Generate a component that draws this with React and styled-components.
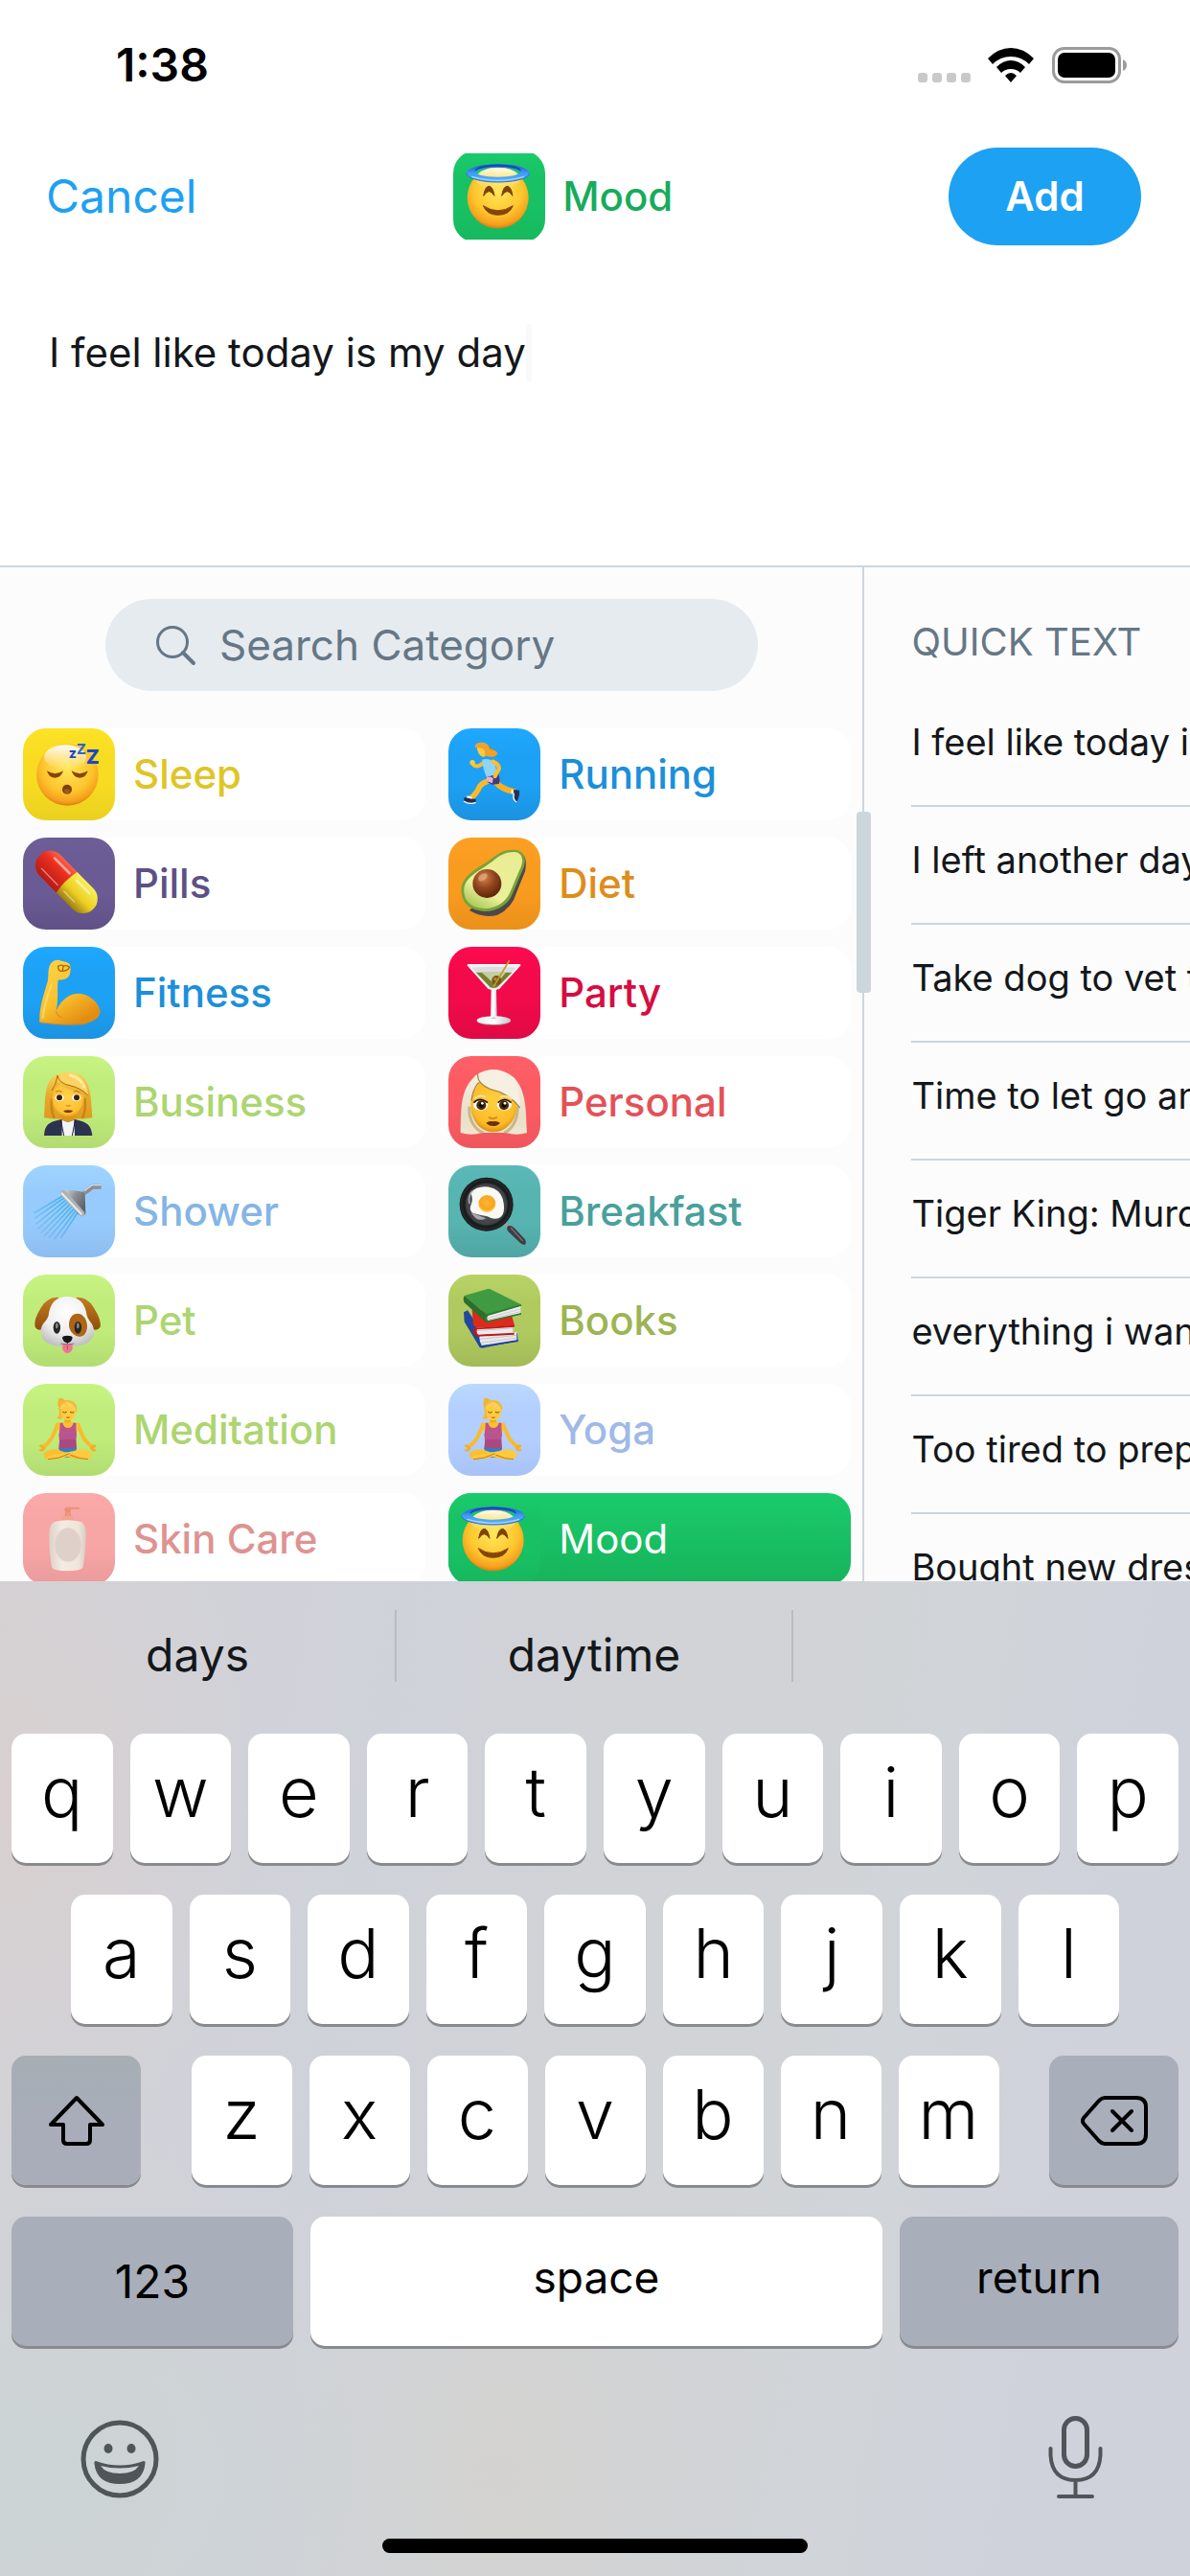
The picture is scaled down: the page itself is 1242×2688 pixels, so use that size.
import React, { useState } from 'react';
import styled, { createGlobalStyle, css } from 'styled-components';

const GlobalStyle = createGlobalStyle`
  * { box-sizing: border-box; }
  body { margin: 0; background: #fff; }
  body, button, input, textarea { font-family: Inter, "Liberation Sans", sans-serif; }
  button { border: 0; padding: 0; background: none; cursor: pointer; }
  ul { list-style: none; margin: 0; padding: 0; }
`;

const Screen = styled.div`
  display: flex;
  flex-direction: column;
  height: 100vh;
  overflow: hidden;
  color: #14171a;
`;

/* ---------- status bar ---------- */
const StatusBar = styled.div`
  display: flex;
  align-items: center;
  justify-content: space-between;
  height: 136px;
  padding: 0 64px 0 121px;
  flex: none;
`;
const Clock = styled.time`
  font-size: 48px;
  line-height: 60px;
  font-weight: 600;
  color: #000;
`;
const StatusIcons = styled.svg`
  display: block;
  width: 220px;
  height: 38px;
`;

/* ---------- header ---------- */
const Header = styled.header`
  display: flex;
  align-items: center;
  justify-content: space-between;
  padding: 18px 51px 0 48px;
  flex: none;
`;
const CancelButton = styled.button`
  font-size: 48px;
  line-height: 60px;
  color: #1da1f2;
`;
const Title = styled.h1`
  display: flex;
  align-items: center;
  gap: 18px;
  margin: 0;
  padding-right: 20px;
  font-size: 42px;
  line-height: 56px;
  font-weight: 500;
  color: #17ab5c;
`;
const TitleIcon = styled.span`
  display: flex;
  align-items: center;
  height: 90px;
  overflow: hidden;
`;
const AddButton = styled.button`
  width: 201px;
  height: 102px;
  border-radius: 51px;
  background: #1da1f2;
  color: #fff;
  font-size: 42px;
  line-height: 56px;
  font-weight: 600;
`;

/* ---------- compose ---------- */
const Compose = styled.label`
  display: flex;
  align-items: flex-start;
  height: 334px;
  padding: 82px 51px 0;
  flex: none;
  cursor: text;
`;
const ComposeInput = styled.input`
  field-sizing: content;
  border: 0;
  padding: 0;
  outline: 0;
  background: none;
  height: 60px;
  font-size: 42px;
  line-height: 60px;
  color: #14171a;
`;
const Caret = styled.span`
  width: 6px;
  height: 60px;
  border-radius: 3px;
  background: #f7f9fa;
`;

/* ---------- panels ---------- */
const Panels = styled.main`
  display: grid;
  grid-template-columns: minmax(0, 29fr) minmax(0, 11fr);
  flex: 1 1 0;
  min-height: 0;
  overflow: hidden;
  border-top: 2px solid #ccd6dd;
  background: #fcfcfc;
`;
const CategoryPanel = styled.section`
  min-height: 0;
  overflow: hidden;
  padding-top: 33px;
`;
const SearchBox = styled.label`
  display: flex;
  align-items: center;
  gap: 24px;
  height: 96px;
  margin: 0 109px 0 110px;
  padding: 0 48px 0 52px;
  border-radius: 48px;
  background: #e6ebef;
  color: #657786;
`;
const SearchInput = styled.input`
  flex: 1;
  min-width: 0;
  border: 0;
  padding: 0;
  outline: 0;
  background: none;
  font-size: 44px;
  line-height: 60px;
  color: #657786;
  &::placeholder { color: #657786; opacity: 1; }
`;
const Glyph = styled.svg`
  display: block;
  flex: none;
  width: ${(p) => p.$w}px;
  height: ${(p) => p.$h}px;
`;
const CategoryGrid = styled.ul`
  display: grid;
  grid-template-columns: 1fr 1fr;
  gap: 18px 24px;
  padding: 39px 12px 0 24px;
`;
const CategoryButton = styled.button`
  display: flex;
  align-items: center;
  gap: 19px;
  width: 100%;
  height: 96px;
  border-radius: 24px;
  background: ${(p) => (p.$active ? 'linear-gradient(#1acb6b, #17b35b)' : '#fff')};
  color: ${(p) => (p.$active ? '#fff' : p.$ink)};
  font-size: 42px;
  line-height: 56px;
  font-weight: ${(p) => (p.$active ? 400 : 500)};
`;
const Tile = styled.span`
  display: block;
  flex: none;
  width: 96px;
  height: 96px;
  border-radius: 24px;
  background: linear-gradient(${(p) => p.$from}, ${(p) => p.$mid} 30%, ${(p) => p.$mid} 60%, ${(p) => p.$to});
`;
const Picture = styled.svg`
  display: block;
  width: 96px;
  height: 96px;
`;

const QuickPanel = styled.aside`
  position: relative;
  min-height: 0;
  padding: 50px 0 0 49px;
  border-left: 2px solid #ccd6dd;
`;
const DragHandle = styled.span`
  position: absolute;
  left: -8px;
  top: 255px;
  width: 15px;
  height: 189px;
  border-radius: 4px;
  background: #ccd6dd;
`;
const QuickArea = styled.div`
  height: 100%;
  overflow: hidden;
`;
const QuickTitle = styled.h2`
  margin: 0 0 21px;
  font-size: 40px;
  line-height: 56px;
  font-weight: 400;
  color: #657786;
`;
const QuickItem = styled.button`
  display: flex;
  align-items: center;
  width: 100%;
  height: 123px;
  padding-bottom: 12px;
  border-bottom: 2px solid #ccd6dd;
  font-size: 38px;
  line-height: 56px;
  color: #14171a;
  white-space: nowrap;
`;

/* ---------- keyboard ---------- */
const Keyboard = styled.section`
  flex: none;
  padding-bottom: 24px;
  background:
    radial-gradient(ellipse 22% 36% at 0% 22%, rgba(216, 208, 208, 1), rgba(216, 208, 208, 0)),
    radial-gradient(ellipse 40% 36% at 0% 90%, rgba(204, 212, 212, 1), rgba(204, 212, 212, 0)),
    radial-gradient(ellipse 20% 30% at 42% 90%, rgba(211, 210, 208, 1), rgba(211, 210, 208, 0)),
    linear-gradient(100deg, #d2d2d6 0%, #d0d2da 30%, #d1d3d6 50%, #d1d4d8 72%, #cfd2db 85%);
`;
const Suggestions = styled.div`
  display: grid;
  grid-template-columns: repeat(3, 1fr);
  height: 159px;
  padding-top: 30px;
`;
const Suggestion = styled.button`
  height: 75px;
  padding-top: 18px;
  border-right: 2px solid ${(p) => (p.$last ? 'transparent' : '#b9bbc0')};
  font-size: 48px;
  line-height: 56px;
  color: #14171a;
`;
const KeyRow = styled.div`
  display: flex;
  justify-content: space-between;
  gap: 18px;
  padding: 0 ${(p) => p.$inset || 12}px 33px;
`;
const LetterGroup = styled.div`
  display: flex;
  gap: 18px;
  flex: 0 1 843px;
`;
const keyBase = css`
  display: flex;
  align-items: center;
  justify-content: center;
  min-width: 0;
  height: 135px;
  border-radius: 15px;
  box-shadow: 0 3px 0 #898a8d;
  color: #000;
`;
const LetterKey = styled.button`
  ${keyBase}
  flex: 1;
  padding-bottom: 14px;
  background: #fff;
  font-size: 72px;
  line-height: 84px;
  font-weight: 300;
`;
const ControlKey = styled.button`
  ${keyBase}
  flex: ${(p) => (p.$grow ? '1 1 0' : `0 0 ${p.$w}px`)};
  padding-bottom: ${(p) => (p.$word ? 10 : 0)}px;
  background: ${(p) => (p.$light ? '#fff' : p.$warm ? 'linear-gradient(#a6aeb4, #a9adba 60%)' : '#a8aeba')};
  font-size: ${(p) => (p.$word ? 46 : 48)}px;
  line-height: 56px;
`;
const KeyboardFooter = styled.div`
  display: flex;
  justify-content: space-between;
  height: 168px;
  padding: 40px 90px 0 80px;
`;
const IconButton = styled.button`
  height: 90px;
  color: #50555a;
`;
const HomeBar = styled.div`
  width: 444px;
  height: 15px;
  margin: 0 auto;
  border-radius: 8px;
  background: #000;
`;

/* ---------- category pictures, drawn on a 288 grid ---------- */
const FaceFill = ({ id }) => (
  <radialGradient id={id} cx="50%" cy="38%" r="62%">
    <stop offset="0" stopColor="#ffe85c" />
    <stop offset="0.65" stopColor="#fdc52c" />
    <stop offset="0.9" stopColor="#f5a01d" />
    <stop offset="1" stopColor="#dd7f12" />
  </radialGradient>
);

const Sleep = () => (
  <>
    <defs>
      <FaceFill id="sleepFace" />
      <linearGradient id="sleepShine" x2="0" y2="1">
        <stop offset="0" stopColor="#fff" stopOpacity="0.95" />
        <stop offset="1" stopColor="#fff" stopOpacity="0" />
      </linearGradient>
    </defs>
    <circle cx="139" cy="145" r="97" fill="url(#sleepFace)" />
    <ellipse cx="132" cy="90" rx="66" ry="38" fill="url(#sleepShine)" />
    <path d="M75 133Q100 150 126 133Q120 154 100 155Q80 154 75 133ZM152 133Q178 150 203 133Q198 154 178 155Q158 154 152 133Z" fill="#874608" />
    <circle cx="138" cy="191" r="15" fill="#7c4009" />
    <ellipse cx="138" cy="197" rx="9" ry="7" fill="#a05a1a" />
    <g fill="#1c47c6" fontFamily="Inter, sans-serif" fontWeight="800">
      <text x="143" y="93" fontSize="42">z</text>
      <text x="168" y="81" fontSize="43" fill="#2d66d0">Z</text>
      <text x="197" y="110" fontSize="62">Z</text>
    </g>
  </>
);

const Pills = () => (
  <>
    <defs>
      <linearGradient id="pillRed" x2="0" y2="1">
        <stop offset="0" stopColor="#f8644a" />
        <stop offset="0.35" stopColor="#ea2f20" />
        <stop offset="1" stopColor="#b81a14" />
      </linearGradient>
      <linearGradient id="pillYellow" x2="0" y2="1">
        <stop offset="0" stopColor="#f9ef5c" />
        <stop offset="0.55" stopColor="#edcf22" />
        <stop offset="1" stopColor="#9b7c12" />
      </linearGradient>
    </defs>
    <g transform="translate(137 140) rotate(45.5)">
      <path d="M2-46H-74A46 46 0 0 0-74 46H2Z" fill="url(#pillRed)" />
      <path d="M0-46H72A46 46 0 0 1 72 46H0Q-10 0 0-46Z" fill="url(#pillYellow)" />
      <path d="M-80-26H-14M18-26H74" stroke="#fff" strokeOpacity="0.5" strokeWidth="8" strokeLinecap="round" />
      <path d="M-86 26H-14M14 26H60" stroke="#fff" strokeOpacity="0.45" strokeWidth="4" strokeLinecap="round" />
    </g>
  </>
);

const Fitness = () => (
  <>
    <defs>
      <linearGradient id="arm" x2="0.6" y2="1">
        <stop offset="0" stopColor="#ffd54a" />
        <stop offset="0.6" stopColor="#fcc02c" />
        <stop offset="1" stopColor="#e28d12" />
      </linearGradient>
    </defs>
    <path d="M52 237C50 195 62 160 78 105C80 82 78 66 86 54C94 42 108 38 120 44C132 46 148 50 148 60C150 66 149 84 144 92C136 102 122 103 110 104C106 130 112 156 104 200C122 160 150 145 176 146C214 150 238 178 242 202C240 226 216 236 190 241C146 246 92 242 52 237Z" fill="url(#arm)" />
    <path d="M104 202C104 212 114 220 122 220M52 236C100 243 160 246 200 240" stroke="#d98a12" strokeWidth="4" fill="none" strokeLinecap="round" opacity="0.7" />
    <path d="M110 62Q118 54 128 60Q138 56 146 64Q136 78 118 76M110 60Q108 72 118 76M126 62L124 74" stroke="#a8650b" strokeWidth="4" fill="none" strokeLinecap="round" />
    <path d="M88 120C80 150 66 180 62 222" stroke="#ffe27a" strokeWidth="6" fill="none" opacity="0.7" strokeLinecap="round" />
  </>
);

const Business = () => (
  <>
    <defs>
      <linearGradient id="bizHair" x2="0" y2="1">
        <stop offset="0" stopColor="#fbd65c" />
        <stop offset="0.5" stopColor="#e9a92c" />
        <stop offset="1" stopColor="#df9a20" />
      </linearGradient>
      <radialGradient id="bizFace" cx="50%" cy="45%" r="58%">
        <stop offset="0" stopColor="#ffd24a" />
        <stop offset="0.8" stopColor="#fdc033" />
        <stop offset="1" stopColor="#d98c14" />
      </radialGradient>
    </defs>
    <path d="M66 193C70 140 66 88 94 66C112 48 164 40 192 70C214 100 214 150 217 193Q180 200 142 196Q100 200 66 193Z" fill="url(#bizHair)" />
    <path d="M90 132Q86 170 98 194M194 132Q198 170 186 194" stroke="#a8690d" strokeWidth="7" opacity="0.5" fill="none" />
    <path d="M120 176H162V206H120Z" fill="#dd9518" />
    <path d="M91 128C92 106 102 96 110 84C130 104 170 110 190 124C192 160 172 190 141 190C110 190 90 160 91 128Z" fill="url(#bizFace)" />
    <path d="M66 249C68 216 80 206 118 199L141 206L164 199C200 206 214 216 217 249Z" fill="#2b3350" />
    <path d="M122 200L141 207L160 200L162 249H122Z" fill="#f2f4f8" />
    <path d="M118 199L128 249M164 199L154 249" stroke="#171d33" strokeWidth="3" />
    <path d="M108 62Q114 84 150 92Q184 100 204 122Q200 72 160 54Q130 46 108 62Z" fill="#fbd464" />
    <path d="M108 60Q112 86 150 93Q180 100 203 122M108 62Q104 90 90 108" stroke="#a8690d" strokeWidth="3" fill="none" />
    <path d="M148 60Q180 68 192 96" stroke="#fff3b8" strokeWidth="9" fill="none" strokeLinecap="round" opacity="0.7" />
    <path d="M102 112Q112 106 122 112M158 112Q168 106 178 114" stroke="#b87713" strokeWidth="3" fill="none" />
    <ellipse cx="114" cy="130" rx="14" ry="11" fill="#fff" /><ellipse cx="167" cy="130" rx="14" ry="11" fill="#fff" />
    <circle cx="114" cy="130" r="9" fill="#3a2108" /><circle cx="168" cy="130" r="9" fill="#3a2108" />
    <path d="M126 171Q141 166 157 171Q152 178 141 178Q130 178 126 171Z" fill="#7e3912" />
    <path d="M135 154Q141 159 148 154" stroke="#dd8f12" strokeWidth="4" fill="none" />
  </>
);

const Personal = () => (
  <>
    <defs>
      <linearGradient id="whiteHair" x2="0" y2="1">
        <stop offset="0" stopColor="#f7f2e6" />
        <stop offset="0.7" stopColor="#e9dfc6" />
        <stop offset="1" stopColor="#efe6d0" />
      </linearGradient>
      <radialGradient id="personalFace" cx="50%" cy="40%" r="60%">
        <stop offset="0" stopColor="#ffd040" />
        <stop offset="0.8" stopColor="#fbbb28" />
        <stop offset="1" stopColor="#dd8e14" />
      </radialGradient>
    </defs>
    <path d="M38 240C40 170 36 110 78 68C100 42 160 30 204 66C246 110 242 170 246 240Q212 250 180 240H106Q70 250 38 240Z" fill="url(#whiteHair)" />
    <path d="M66 158C62 200 84 232 110 240M216 158C218 200 198 232 174 240" stroke="#b39a5e" strokeWidth="9" fill="none" opacity="0.6" />
    <path d="M70 146C72 116 92 96 98 76C124 116 196 104 214 148C216 196 186 238 141 238C96 238 68 196 70 146Z" fill="url(#personalFace)" />
    <path d="M92 58Q90 84 128 102Q190 114 224 160Q224 90 190 58Q140 26 92 58Z" fill="#f6f0e2" />
    <path d="M92 54Q88 86 130 103Q190 116 224 162" stroke="#a88847" strokeWidth="4" fill="none" />
    <path d="M72 140Q76 104 95 82" stroke="#a88847" strokeWidth="4" fill="none" />
    <path d="M82 132Q98 120 114 128M164 128Q182 120 198 134" stroke="#f3dfa0" strokeWidth="6" fill="none" strokeLinecap="round" />
    <ellipse cx="101" cy="153" rx="23" ry="17" fill="#fff" /><ellipse cx="175" cy="153" rx="23" ry="17" fill="#fff" />
    <circle cx="103" cy="154" r="15" fill="#4b2a0c" /><circle cx="174" cy="154" r="15" fill="#4b2a0c" />
    <circle cx="103" cy="154" r="7" fill="#0d0602" /><circle cx="174" cy="154" r="7" fill="#0d0602" />
    <circle cx="106" cy="148" r="4" fill="#fff" /><circle cx="177" cy="148" r="4" fill="#fff" />
    <path d="M79 146Q98 126 123 146M155 146Q176 126 197 146" stroke="#2a1605" strokeWidth="5" fill="none" />
    <path d="M128 192Q139 200 151 192" stroke="#d98a12" strokeWidth="6" fill="none" strokeLinecap="round" />
    <path d="M118 209Q130 202 140 205Q150 202 162 209Q154 219 140 219Q126 219 118 209Z" fill="#6d2f0f" />
  </>
);

const Shower = () => (
  <>
    <defs>
      <linearGradient id="chrome" x2="1" y2="0.6">
        <stop offset="0" stopColor="#e3e5e7" />
        <stop offset="0.5" stopColor="#8e9296" />
        <stop offset="1" stopColor="#5d6165" />
      </linearGradient>
      <linearGradient id="spray" x1="1" y1="0" x2="0" y2="1">
        <stop offset="0" stopColor="#2cb2f0" />
        <stop offset="1" stopColor="#4fa9d4" stopOpacity="0.15" />
      </linearGradient>
    </defs>
    <path d="M124 96L34 150M129 102L36 166M134 109L40 184M140 115L46 200M147 122L56 212M153 129L66 222M159 136L80 228M165 142L98 232M171 148L118 228" stroke="url(#spray)" strokeWidth="5" fill="none" />
    <path d="M122 84L136 76L194 84L196 152L186 160L172 152Z" fill="url(#chrome)" />
    <path d="M118 82Q124 74 134 80L192 146Q196 158 186 160Q180 160 174 152L122 98Q116 90 118 82Z" fill="#aeb2b6" />
    <path d="M122 88L182 152" stroke="#eceeef" strokeWidth="6" strokeLinecap="round" />
    <path d="M192 86L218 67H245" stroke="#8b8f94" strokeWidth="15" fill="none" strokeLinejoin="round" />
    <path d="M192 80L216 62H245" stroke="#d9dcde" strokeWidth="4" fill="none" />
  </>
);

const Pet = () => (
  <>
    <defs>
      <radialGradient id="dogHead" cx="50%" cy="30%" r="75%">
        <stop offset="0" stopColor="#fff" />
        <stop offset="0.6" stopColor="#ededed" />
        <stop offset="1" stopColor="#b9b9b9" />
      </radialGradient>
      <linearGradient id="dogEar" x2="0" y2="1">
        <stop offset="0" stopColor="#c57b20" />
        <stop offset="1" stopColor="#8f4e0b" />
      </linearGradient>
    </defs>
    <path d="M112 72Q78 68 56 104Q32 142 38 164Q48 180 66 168Q92 140 104 92ZM166 72Q200 68 222 104Q246 142 242 164Q230 180 214 168Q186 140 174 92Z" fill="url(#dogEar)" />
    <path d="M139 69C180 69 196 96 200 128C206 148 222 152 222 178C222 208 196 226 139 226C82 226 56 208 56 178C56 152 74 148 80 128C84 96 98 69 139 69Z" fill="url(#dogHead)" />
    <path d="M170 122C192 122 202 146 201 166C198 188 188 195 176 194C156 192 142 172 144 152C146 134 156 122 170 122Z" fill="#ad6615" />
    <ellipse cx="106" cy="166" rx="11" ry="19" fill="#262626" /><ellipse cx="172" cy="166" rx="11" ry="19" fill="#262626" />
    <ellipse cx="106" cy="160" rx="4" ry="9" fill="#8a8a8a" /><ellipse cx="172" cy="160" rx="4" ry="9" fill="#8a8a8a" />
    <path d="M139 208V218" stroke="#555" strokeWidth="4" />
    <path d="M124 220Q139 214 155 220Q158 244 139 246Q120 244 124 220Z" fill="#f27392" />
    <path d="M139 222V236" stroke="#c84a6c" strokeWidth="3" />
    <path d="M118 216Q139 222 160 216" stroke="#777" strokeWidth="3" fill="none" />
    <path d="M123 198Q124 191 139 191Q154 191 155 198Q152 212 139 214Q126 212 123 198Z" fill="#161616" />
  </>
);

const Lotus = () => (
  <>
    <path d="M112 50Q106 62 112 74Q124 62 136 58Q128 44 116 44Q108 46 112 50Z" fill="#f0b433" />
    <path d="M124 54Q112 66 112 82Q118 96 106 108Q118 114 126 106L134 112L160 96Q176 78 164 62Q150 46 124 54Z" fill="#f2b936" />
    <path d="M130 104H150V130H130Z" fill="#edab20" />
    <ellipse cx="142" cy="90" rx="23" ry="25" fill="#ffcb40" />
    <path d="M116 82Q118 58 140 60Q128 76 116 82ZM132 56Q158 56 166 84Q144 76 132 56Z" fill="#fbd060" />
    <path d="M124 88Q130 93 137 88M147 88Q154 93 160 88" stroke="#7c4d0c" strokeWidth="3" fill="none" />
    <path d="M134 104H148Q141 110 134 104Z" fill="#8a3014" />
    <path d="M108 128Q100 150 90 170Q76 190 62 200" stroke="#f9bb2c" strokeWidth="12" fill="none" strokeLinecap="round" />
    <path d="M172 128Q180 150 190 170Q204 190 220 200" stroke="#f9bb2c" strokeWidth="12" fill="none" strokeLinecap="round" />
    <path d="M104 128Q108 122 124 121H158Q172 122 176 128L166 160H116Z" fill="#fbbf2f" />
    <path d="M116 122H124Q128 138 141 138Q154 138 158 122H166Q166 146 168 158Q164 180 168 204H112Q116 180 112 158Q116 146 116 122Z" fill="#b9548e" />
    <path d="M115 176Q140 170 166 176L168 204H112Z" fill="#a2447d" opacity="0.7" />
    <path d="M112 202H168L160 230H120Z" fill="#2f7fc4" />
    <path d="M70 214Q92 198 120 210Q150 222 196 216Q212 226 196 236Q164 238 128 224Q96 240 72 234Q60 224 70 214Z" fill="#fbbf2f" />
    <path d="M210 214Q190 198 160 210L88 224Q70 228 76 234Q116 240 150 222Q184 240 208 234Q220 224 210 214Z" fill="#ffca3e" />
    <path d="M78 236Q112 236 146 218M148 222Q176 236 204 236" stroke="#c57a10" strokeWidth="3" fill="none" />
    <path d="M52 196Q60 190 66 202Q60 212 52 206M228 196Q220 190 214 202Q220 212 228 206" stroke="#f2ae22" strokeWidth="7" fill="none" />
  </>
);

const SkinCare = () => (
  <>
    <defs>
      <linearGradient id="bottle" x2="1" y2="0">
        <stop offset="0" stopColor="#dcd2c6" />
        <stop offset="0.35" stopColor="#f4ebe2" />
        <stop offset="0.8" stopColor="#efe5db" />
        <stop offset="1" stopColor="#d8ccc0" />
      </linearGradient>
    </defs>
    <path d="M132 82L134 58H146L150 82Z" fill="#ef9a80" stroke="#dd8c74" strokeWidth="3" />
    <path d="M128 50L136 44H176V50H150V58H132Z" fill="#e8917a" />
    <path d="M122 72H158V84H122Z" fill="#f3a48c" />
    <path d="M98 90Q139 80 182 90Q198 98 197 130Q196 190 188 232Q184 244 139 244Q94 244 90 232Q82 190 82 130Q82 98 98 90Z" fill="url(#bottle)" />
    <ellipse cx="141" cy="162" rx="41" ry="53" fill="#e0d0ca" />
  </>
);

const Running = () => (
  <>
    <path d="M108 52Q132 56 150 74L150 88Q124 92 112 78Z" fill="#c88118" />
    <path d="M88 52Q90 84 108 90Q124 88 128 66Q124 46 104 44Q90 46 88 52Z" fill="#ffc93c" />
    <path d="M84 60Q80 44 104 44Q126 44 130 66Q152 68 154 80Q140 96 112 84Q120 70 106 62Z" fill="#eda22b" />
    <path d="M114 104Q92 124 80 116L76 108" stroke="#fbbf2f" strokeWidth="12" fill="none" strokeLinecap="round" strokeLinejoin="round" />
    <circle cx="75" cy="107" r="8" fill="#ffca3e" />
    <path d="M136 162Q110 166 98 182Q88 206 66 222" stroke="#fbb929" strokeWidth="17" fill="none" strokeLinecap="round" strokeLinejoin="round" />
    <path d="M148 168Q166 190 204 198" stroke="#f7b024" strokeWidth="18" fill="none" strokeLinecap="round" strokeLinejoin="round" />
    <path d="M106 98Q128 92 146 106Q148 126 154 148L124 160Q108 134 106 98Z" fill="#8fd3f5" />
    <path d="M122 152L156 142Q164 160 158 174L136 176L122 168Z" fill="#433a80" />
    <path d="M120 154Q132 148 140 156L138 172Q126 168 120 166Z" fill="#e9b3cd" />
    <path d="M140 104Q160 112 158 128Q150 140 146 150" stroke="#fbbf2f" strokeWidth="13" fill="none" strokeLinecap="round" strokeLinejoin="round" />
    <path d="M50 216L86 222V232Q66 240 48 228Z" fill="#262f55" />
    <path d="M48 228Q66 240 86 232" stroke="#fff" strokeWidth="4" fill="none" />
    <path d="M204 192L222 194Q224 212 214 230Q204 226 206 210Z" fill="#262f55" />
    <path d="M205 204Q200 224 214 231" stroke="#fff" strokeWidth="4" fill="none" />
    <path d="M58 214L74 218M200 192V204" stroke="#fff" strokeWidth="6" />
  </>
);

const Diet = () => (
  <>
    <defs>
      <radialGradient id="pit" cx="40%" cy="30%" r="75%">
        <stop offset="0" stopColor="#d58248" />
        <stop offset="0.5" stopColor="#90441c" />
        <stop offset="1" stopColor="#542209" />
      </radialGradient>
      <linearGradient id="flesh" x1="0.8" y1="0" x2="0.2" y2="1">
        <stop offset="0" stopColor="#e9ec93" />
        <stop offset="0.7" stopColor="#eaf09b" />
        <stop offset="1" stopColor="#a9c957" />
      </linearGradient>
    </defs>
    <path d="M232 52Q248 66 240 106Q228 136 214 170Q200 220 154 242Q110 254 66 228Z" fill="#4b474c" />
    <path d="M206 38C236 38 246 66 236 94C222 126 212 150 200 178C182 220 136 238 94 228C56 222 34 190 42 150C52 112 100 92 130 70C158 46 176 38 206 38Z" fill="#78a336" />
    <path d="M206 45C230 46 236 68 228 90C214 122 204 146 192 174C174 212 132 228 96 220C60 214 44 186 50 152C60 118 106 98 136 76C162 54 180 45 206 45Z" fill="url(#flesh)" />
    <circle cx="121" cy="144" r="45" fill="url(#pit)" />
    <ellipse cx="108" cy="124" rx="16" ry="10" fill="#f0b58a" opacity="0.6" transform="rotate(-35 108 124)" />
  </>
);

const Party = () => (
  <>
    <defs>
      <linearGradient id="glass" x2="1" y2="0">
        <stop offset="0" stopColor="#e9e9ec" />
        <stop offset="0.5" stopColor="#fff" />
        <stop offset="1" stopColor="#c3c5cb" />
      </linearGradient>
    </defs>
    <path d="M60 56H225L156 132Q142 142 128 132Z" fill="#efeff0" />
    <path d="M74 66Q142 58 212 66L200 80H86Z" fill="#dcdde0" />
    <path d="M86 80H200L154 126Q142 132 130 126Z" fill="#77802f" />
    <path d="M104 80H180L148 120Z" fill="#c2cf9b" />
    <path d="M60 56L128 132M225 56L156 132" stroke="#f5f5f5" strokeWidth="5" />
    <path d="M60 56H225" stroke="#fff" strokeWidth="4" />
    <path d="M134 134H150L152 222H132Z" fill="url(#glass)" />
    <ellipse cx="142" cy="232" rx="53" ry="14" fill="#b4707f" />
    <ellipse cx="142" cy="230" rx="53" ry="13" fill="url(#glass)" />
    <path d="M132 226Q142 214 152 226" fill="#c9cbd0" />
    <circle cx="151" cy="105" r="15" fill="#7b531b" />
    <circle cx="147" cy="101" r="5" fill="#b58c42" />
    <path d="M142 124L190 44" stroke="#c29a2f" strokeWidth="5" strokeLinecap="round" />
  </>
);

const Breakfast = () => (
  <>
    <defs>
      <radialGradient id="yolk" cx="50%" cy="40%" r="60%">
        <stop offset="0" stopColor="#ffb43a" />
        <stop offset="0.7" stopColor="#f9a51c" />
        <stop offset="1" stopColor="#ffd04d" />
      </radialGradient>
      <radialGradient id="pan" cx="50%" cy="50%" r="50%">
        <stop offset="0" stopColor="#65686b" />
        <stop offset="0.75" stopColor="#3f4144" />
        <stop offset="0.82" stopColor="#17181a" />
        <stop offset="0.95" stopColor="#26282a" />
        <stop offset="1" stopColor="#0d0e0f" />
      </radialGradient>
    </defs>
    <path d="M176 182L190 196" stroke="#9a9da0" strokeWidth="12" />
    <path d="M186 190Q196 186 206 196L240 232Q246 244 238 249Q228 248 218 236L188 208Q180 198 186 190Z" fill="#3f3d43" />
    <path d="M196 196L232 236" stroke="#77757b" strokeWidth="4" strokeLinecap="round" />
    <circle cx="119" cy="122" r="84" fill="url(#pan)" />
    <path d="M70 86Q90 62 128 68Q160 74 170 104Q182 150 160 164Q142 172 122 160Q96 156 78 150Q62 140 72 120Q78 104 70 86Z" fill="#f8f8f4" />
    <path d="M70 148Q96 158 118 166Q100 176 84 164Z" fill="#a9abad" />
    <path d="M76 80Q60 96 66 120" stroke="#b9bbbd" strokeWidth="6" fill="none" opacity="0.8" />
    <circle cx="121" cy="120" r="27" fill="url(#yolk)" />
  </>
);

const Books = () => (
  <>
    <path d="M48 118L60 112L104 176L216 184L218 208L106 230L98 228L50 148Z" fill="#21489c" />
    <path d="M98 190L214 180V206L106 226Q94 206 98 190Z" fill="#e9e9ec" />
    <path d="M100 202L214 190M102 214L214 198" stroke="#b5b7bd" strokeWidth="2" />
    <path d="M98 228L218 210V204L104 222Z" fill="#1f439a" />
    <path d="M74 110L196 120L208 162L90 168L78 158Z" fill="#dd2a1d" />
    <path d="M84 168L202 160V184L92 190Q80 180 84 168Z" fill="#ececee" />
    <path d="M88 176L202 168" stroke="#b5b7bd" strokeWidth="2" />
    <path d="M80 168L206 158V164L90 172Q86 182 94 188L206 182V188L90 194Q72 182 80 168Z" fill="#bd1a14" />
    <path d="M50 66L128 44L228 94L120 126Z" fill="#3f9a42" />
    <path d="M50 66L120 126L118 150L50 88Q44 76 50 66Z" fill="#2a6f2b" />
    <path d="M122 126L226 98V122L122 146Q114 136 122 126Z" fill="#eeeef0" />
    <path d="M122 136L226 108M122 142L226 116" stroke="#b9bbc0" strokeWidth="2" />
    <path d="M118 124L228 93V98L124 129Q118 136 124 144L228 120V125L118 150Q108 136 118 124Z" fill="#2d7a2f" />
  </>
);

const Angel = ({ id }) => (
  <>
    <defs>
      <FaceFill id={id} />
      <linearGradient id={`${id}Halo`} x2="0" y2="1">
        <stop offset="0" stopColor="#1b55cf" />
        <stop offset="0.5" stopColor="#3f9bf5" />
        <stop offset="1" stopColor="#5fb2fa" />
      </linearGradient>
      <linearGradient id={`${id}Shine`} x2="0" y2="1">
        <stop offset="0" stopColor="#fffef2" />
        <stop offset="1" stopColor="#fff3a0" stopOpacity="0" />
      </linearGradient>
    </defs>
    <circle cx="140" cy="148" r="96" fill={`url(#${id})`} />
    <ellipse cx="140" cy="88" rx="70" ry="34" fill={`url(#${id}Shine)`} />
    <path fillRule="evenodd" d="M41 71A99 28 0 1 0 239 71A99 28 0 1 0 41 71ZM70 68A70 15 0 1 1 210 68A70 15 0 1 1 70 68Z" fill={`url(#${id}Halo)`} />
    <path d="M70 64A70 17 0 0 1 210 64" stroke="#1746bd" strokeWidth="5" fill="none" />
    <path d="M41 71A99 28 0 0 0 239 71" stroke="#2c6fdc" strokeWidth="3" fill="none" />
    <path d="M58 82Q140 106 222 82" stroke="#a9d8ff" strokeWidth="4" fill="none" />
    <path d="M95 142Q100 112 112 112Q124 112 129 142Q120 128 112 128Q104 128 95 142ZM152 142Q157 112 169 112Q181 112 186 142Q177 128 169 128Q161 128 152 142Z" fill="#7d4208" stroke="#7d4208" strokeWidth="3" strokeLinejoin="round" />
    <path d="M94 173Q140 204 187 173Q176 202 140 202Q106 202 94 173Z" fill="#84440a" stroke="#84440a" strokeWidth="3" strokeLinejoin="round" />
  </>
);

const LIME = ['#c6f481', '#c0ec7b', '#b2dc72'];
const BLUE = ['#1ea8ff', '#1da1f5', '#1b92e0'];

const CATEGORIES = [
  { name: 'Sleep', art: Sleep, fill: ['#fbe325', '#f8dc22', '#ead01f'], ink: '#dfc526' },
  { name: 'Running', art: Running, fill: BLUE, ink: '#1c8fdb' },
  { name: 'Pills', art: Pills, fill: ['#6e5e98', '#6b5b95', '#5f5186'], ink: '#5d5085' },
  { name: 'Diet', art: Diet, fill: ['#fca023', '#f99b1f', '#ea901a'], ink: '#de8d1a' },
  { name: 'Fitness', art: Fitness, fill: BLUE, ink: '#1c8fdb' },
  { name: 'Party', art: Party, fill: ['#fe0b4f', '#f20a4a', '#df0a44'], ink: '#d60c42' },
  { name: 'Business', art: Business, fill: LIME, ink: '#add571' },
  { name: 'Personal', art: Personal, fill: ['#ff6067', '#fc5b62', '#ee565c'], ink: '#e45158' },
  { name: 'Shower', art: Shower, fill: ['#9fd4ff', '#98cbfd', '#8cbdf0'], ink: '#85b5e6' },
  { name: 'Breakfast', art: Breakfast, fill: ['#5ab9b7', '#57b5b1', '#4fa6a3'], ink: '#49a09c' },
  { name: 'Pet', art: Pet, fill: LIME, ink: '#add571' },
  { name: 'Books', art: Books, fill: ['#b8d364', '#b0ca60', '#a2bb58'], ink: '#9db453' },
  { name: 'Meditation', art: Lotus, fill: LIME, ink: '#add571' },
  { name: 'Yoga', art: Lotus, fill: ['#bbd8ff', '#b3cfff', '#a8c2f8'], ink: '#9fb9e8' },
  { name: 'Skin Care', art: SkinCare, fill: ['#fba9a9', '#f8a5a5', '#ea9b9b'], ink: '#de9391' },
  { name: 'Mood', art: () => <Angel id="moodFace" />, fill: ['#1acb6b', '#18c264', '#17b75d'], ink: '#17ab5c' },
];

const TITLE_CATEGORY = { art: () => <Angel id="titleFace" />, fill: ['#1acb6b', '#18c264', '#17b75d'] };

const QUICK_TEXTS = [
  'I feel like today is my day',
  'I left another day',
  'Take dog to vet today',
  'Time to let go and move on',
  'Tiger King: Murder, Mayhem',
  'everything i wanted',
  'Too tired to prepare dinner',
  'Bought new dresses',
];

const CategoryTile = ({ category }) => {
  const Art = category.art;
  const [from, mid, to] = category.fill;
  return (
    <Tile $from={from} $mid={mid} $to={to}>
      <Picture viewBox="0 0 288 288" aria-hidden="true"><Art /></Picture>
    </Tile>
  );
};

const Letters = ({ keys }) => [...keys].map((k) => <LetterKey key={k} type="button">{k}</LetterKey>);

export default function App() {
  const [text, setText] = useState('I feel like today is my day');
  const [query, setQuery] = useState('');
  const [selected, setSelected] = useState('Mood');

  return (
    <Screen>
      <GlobalStyle />
      <StatusBar>
        <Clock>1:38</Clock>
        <StatusIcons viewBox="0 0 220 38" aria-hidden="true">
          <g fill="#c9c9c9">
            <rect x="0" y="27" width="10" height="10" rx="3" />
            <rect x="15" y="27" width="10" height="10" rx="3" />
            <rect x="30" y="27" width="10" height="10" rx="3" />
            <rect x="45" y="27" width="10" height="10" rx="3" />
          </g>
          <path d="M73 12Q84 1 97 1T121 12L116 18Q108 10 97 10T78 18ZM82 21Q89 14 97 14T112 21L107 27Q103 23 97 23T87 27ZM91 30Q94 27 97 27T103 30L97 37Z" />
          <rect x="141.500" y="1.500" width="69" height="35" rx="11" fill="none" stroke="#9b9b9b" strokeWidth="3" />
          <rect x="146" y="6" width="60" height="26" rx="7" />
          <path d="M214 13Q218 15 218 19T214 25Z" fill="#9b9b9b" />
        </StatusIcons>
      </StatusBar>

      <Header>
        <CancelButton type="button">Cancel</CancelButton>
        <Title>
          <TitleIcon>
            <CategoryTile category={TITLE_CATEGORY} />
          </TitleIcon>
          Mood
        </Title>
        <AddButton type="button">Add</AddButton>
      </Header>

      <Compose>
        <ComposeInput aria-label="Entry" value={text} onChange={(e) => setText(e.target.value)} />
        <Caret />
      </Compose>

      <Panels>
        <CategoryPanel>
          <SearchBox>
            <Glyph $w={43} $h={43} viewBox="0 0 43 43" fill="none" stroke="currentColor" strokeWidth="3" strokeLinecap="round" aria-hidden="true">
              <circle cx="18" cy="18" r="15.500" />
              <path d="M29 29L40 40" strokeWidth="4" />
            </Glyph>
            <SearchInput aria-label="Search Category" placeholder="Search Category" value={query} onChange={(e) => setQuery(e.target.value)} />
          </SearchBox>
          <CategoryGrid>
            {CATEGORIES.map((c) => (
              <li key={c.name}>
                <CategoryButton type="button" $active={c.name === selected} $ink={c.ink} onClick={() => setSelected(c.name)}>
                  <CategoryTile category={c} />
                  {c.name}
                </CategoryButton>
              </li>
            ))}
          </CategoryGrid>
        </CategoryPanel>

        <QuickPanel>
          <DragHandle />
          <QuickArea>
            <QuickTitle>QUICK TEXT</QuickTitle>
            <ul>
              {QUICK_TEXTS.map((t) => (
                <li key={t}><QuickItem type="button" onClick={() => setText(t)}>{t}</QuickItem></li>
              ))}
            </ul>
          </QuickArea>
        </QuickPanel>
      </Panels>

      <Keyboard>
        <Suggestions>
          <Suggestion type="button">days</Suggestion>
          <Suggestion type="button">daytime</Suggestion>
          <Suggestion type="button" aria-label="No suggestion" $last />
        </Suggestions>
        <KeyRow><Letters keys="qwertyuiop" /></KeyRow>
        <KeyRow $inset={74}><Letters keys="asdfghjkl" /></KeyRow>
        <KeyRow>
          <ControlKey type="button" $w={135} $warm aria-label="Shift">
            <Glyph $w={60} $h={54} viewBox="0 0 60 54" fill="none" stroke="#000" strokeWidth="4" strokeLinejoin="round" aria-hidden="true">
              <path d="M30 3L57 31H44V47Q44 51 40 51H20Q16 51 16 47V31H3Z" />
            </Glyph>
          </ControlKey>
          <LetterGroup><Letters keys="zxcvbnm" /></LetterGroup>
          <ControlKey type="button" $w={135} aria-label="Delete">
            <Glyph $w={70} $h={52} viewBox="0 0 70 52" fill="none" stroke="#000" strokeWidth="4" strokeLinejoin="round" strokeLinecap="round" aria-hidden="true">
              <path d="M25 2H58Q68 2 68 12V40Q68 50 58 50H25Q22 50 19 47L3 29Q1 26 3 23L19 5Q22 2 25 2Z" />
              <path d="M33 16L53 36M53 16L33 36" />
            </Glyph>
          </ControlKey>
        </KeyRow>
        <KeyRow>
          <ControlKey type="button" $w={294}>123</ControlKey>
          <ControlKey type="button" $light $grow $word>space</ControlKey>
          <ControlKey type="button" $w={291} $word>return</ControlKey>
        </KeyRow>
        <KeyboardFooter>
          <IconButton type="button" aria-label="Emoji">
            <Glyph $w={90} $h={90} viewBox="0 0 90 90" aria-hidden="true">
              <circle cx="45" cy="45" r="38" fill="none" stroke="currentColor" strokeWidth="5" />
              <ellipse cx="33" cy="34" rx="4.500" ry="5" fill="currentColor" />
              <ellipse cx="57" cy="34" rx="4.500" ry="5" fill="currentColor" />
              <path d="M20 47Q45 56 70 47Q72 47 71.500 50Q69 71 45 71T18.500 50Q18 47 20 47ZM25 52Q30 60 45 60T65 52Q45 57 25 52Z" fill="currentColor" fillRule="evenodd" />
            </Glyph>
          </IconButton>
          <IconButton type="button" aria-label="Dictation">
            <Glyph $w={60} $h={90} viewBox="0 0 60 90" fill="none" stroke="currentColor" strokeWidth="5" strokeLinecap="round" aria-hidden="true">
              <rect x="18.500" y="2.500" width="24" height="50" rx="12" />
              <path d="M4.500 34V41Q6 67 30.500 67T56.500 41V34M30.500 67V82M13 84H48" strokeWidth="4" />
            </Glyph>
          </IconButton>
        </KeyboardFooter>
        <HomeBar />
      </Keyboard>
    </Screen>
  );
}
